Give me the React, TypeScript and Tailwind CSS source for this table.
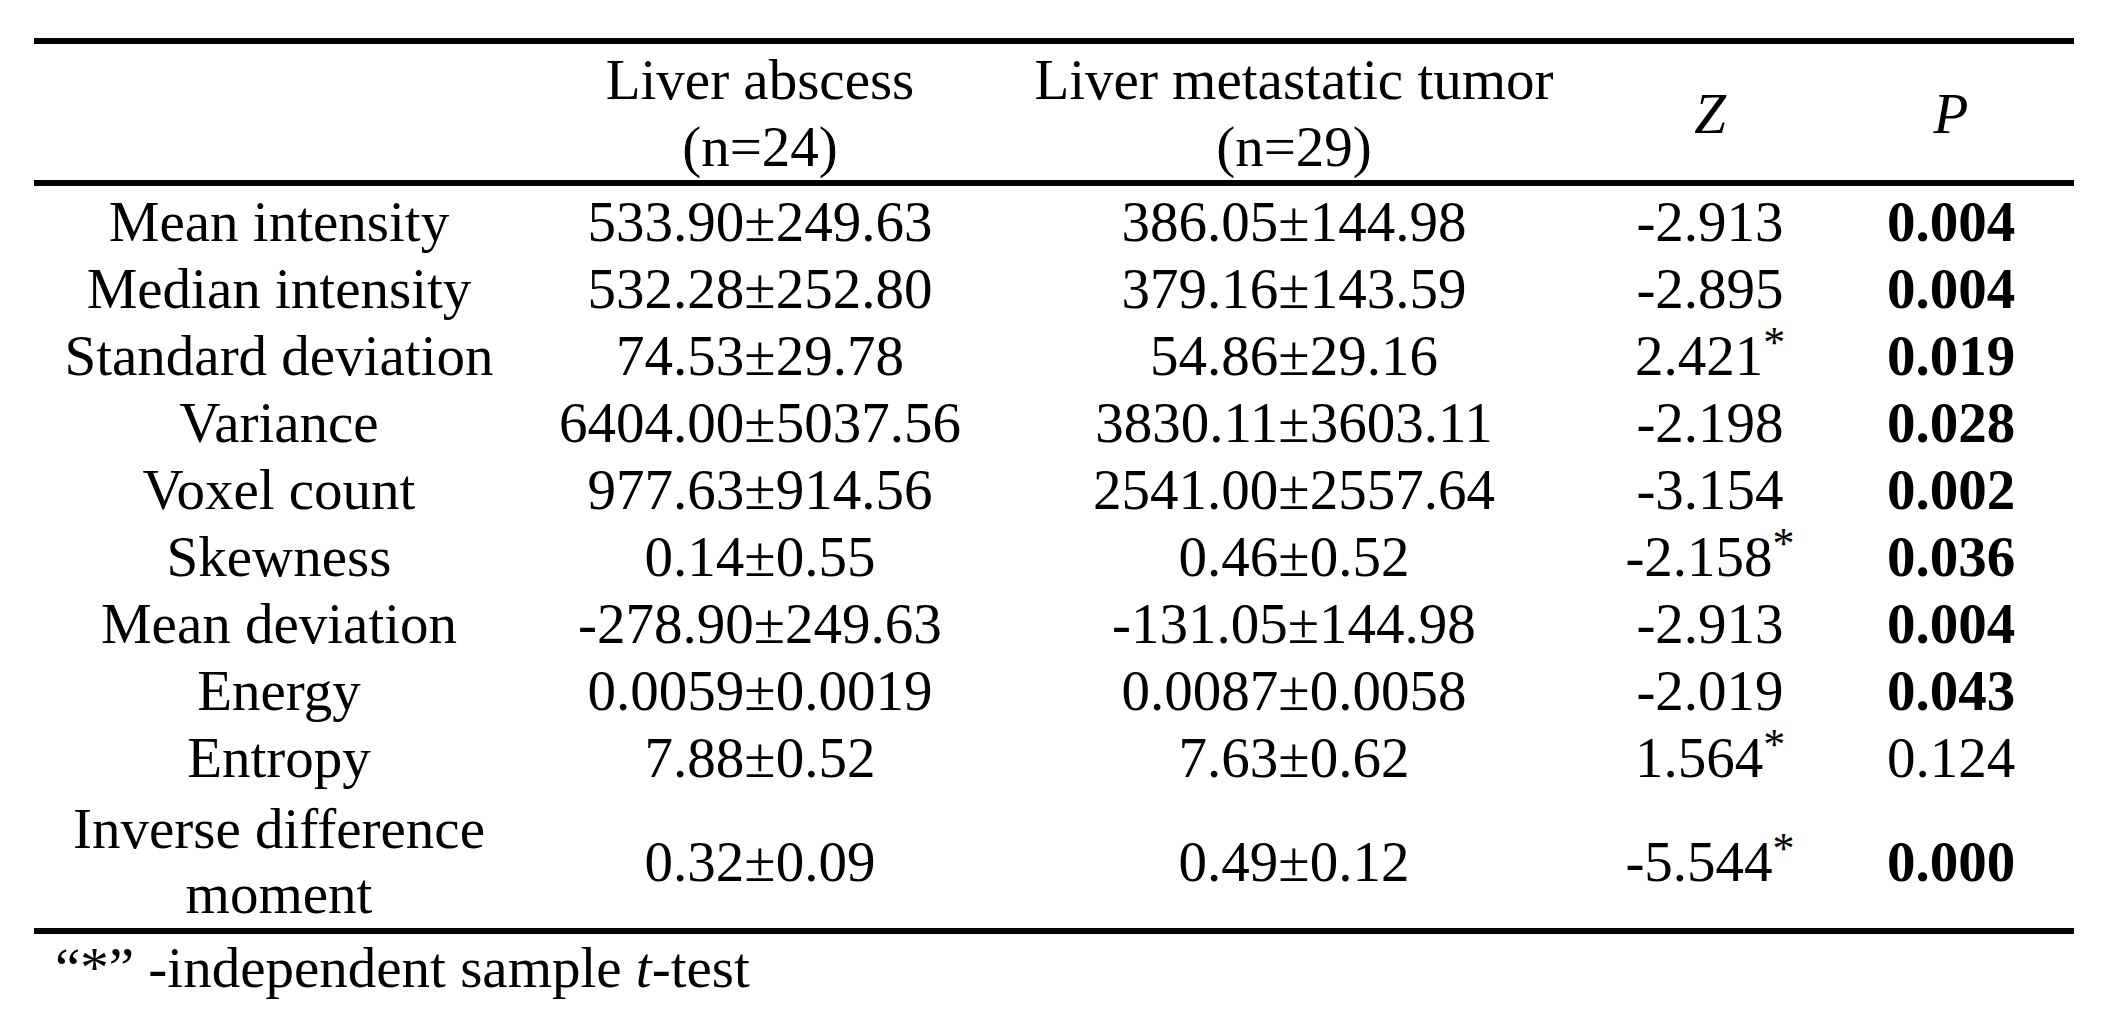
const cols = "grid grid-cols-[490px_472px_596px_236px_246px] text-center";

type Row = {
  label: string;
  abscess: string;
  tumor: string;
  z: string;
  tTest?: boolean;
  p: string;
  sig: boolean;
};

const ROWS: Row[] = [
  { label: "Mean intensity", abscess: "533.90±249.63", tumor: "386.05±144.98", z: "-2.913", p: "0.004", sig: true },
  { label: "Median intensity", abscess: "532.28±252.80", tumor: "379.16±143.59", z: "-2.895", p: "0.004", sig: true },
  { label: "Standard deviation", abscess: "74.53±29.78", tumor: "54.86±29.16", z: "2.421", tTest: true, p: "0.019", sig: true },
  { label: "Variance", abscess: "6404.00±5037.56", tumor: "3830.11±3603.11", z: "-2.198", p: "0.028", sig: true },
  { label: "Voxel count", abscess: "977.63±914.56", tumor: "2541.00±2557.64", z: "-3.154", p: "0.002", sig: true },
  { label: "Skewness", abscess: "0.14±0.55", tumor: "0.46±0.52", z: "-2.158", tTest: true, p: "0.036", sig: true },
  { label: "Mean deviation", abscess: "-278.90±249.63", tumor: "-131.05±144.98", z: "-2.913", p: "0.004", sig: true },
  { label: "Energy", abscess: "0.0059±0.0019", tumor: "0.0087±0.0058", z: "-2.019", p: "0.043", sig: true },
  { label: "Entropy", abscess: "7.88±0.52", tumor: "7.63±0.62", z: "1.564", tTest: true, p: "0.124", sig: false },
];

function ZValue({ z, tTest }: { z: string; tTest?: boolean }) {
  return (
    <span>
      {z}
      {tTest && <sup className="text-[44px] top-[-0.4em]">*</sup>}
    </span>
  );
}

function DataRow({ row }: { row: Row }) {
  return (
    <div className={`${cols} h-[67px] leading-[67px]`}>
      <div>{row.label}</div>
      <div>{row.abscess}</div>
      <div>{row.tumor}</div>
      <div>
        <ZValue z={row.z} tTest={row.tTest} />
      </div>
      <div className={row.sig ? "font-bold" : ""}>{row.p}</div>
    </div>
  );
}

export default function App() {
  return (
    <div className="min-h-screen w-full bg-white text-black font-['Liberation_Serif',serif] text-[57px]">
      <div className="ml-[34px] pt-[38px] w-[2040px]">
        <div className="h-[6px] bg-black" />

        {/* header */}
        <div className={`${cols} items-center pt-[2px] leading-[67px]`}>
          <div />
          <div>
            Liver abscess
            <br />
            (n=24)
          </div>
          <div>
            Liver metastatic tumor
            <br />
            (n=29)
          </div>
          <div className="italic">Z</div>
          <div className="italic">P</div>
        </div>

        <div className="h-[6px] bg-black" />

        {/* body */}
        <div className="pt-[2px] pb-[2px]">
          {ROWS.map((row) => (
            <DataRow key={row.label} row={row} />
          ))}
          <div className={`${cols} items-center mt-[5px] leading-[67px]`}>
            <div className="leading-[65px]">
              Inverse difference
              <br />
              moment
            </div>
            <div>0.32±0.09</div>
            <div>0.49±0.12</div>
            <div>
              <ZValue z="-5.544" tTest />
            </div>
            <div className="font-bold">0.000</div>
          </div>
        </div>

        <div className="h-[6px] bg-black" />

        <p className="pl-[21px] leading-[67px]">
          “*” -independent sample <span className="italic">t</span>-test
        </p>
      </div>
    </div>
  );
}
